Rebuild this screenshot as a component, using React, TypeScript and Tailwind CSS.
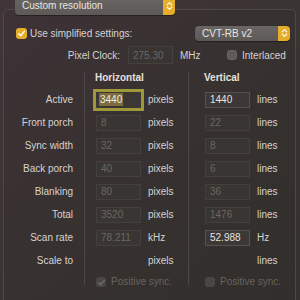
import React from 'react';

type FieldState = 'focus' | 'enabled' | 'disabled' | 'none';

interface Row {
  label: string;
  h: string;
  hUnit: string;
  hState: FieldState;
  v: string;
  vUnit: string;
  vState: FieldState;
}

const rows: Row[] = [
  { label: 'Active', h: '3440', hUnit: 'pixels', hState: 'focus', v: '1440', vUnit: 'lines', vState: 'enabled' },
  { label: 'Front porch', h: '8', hUnit: 'pixels', hState: 'disabled', v: '22', vUnit: 'lines', vState: 'disabled' },
  { label: 'Sync width', h: '32', hUnit: 'pixels', hState: 'disabled', v: '8', vUnit: 'lines', vState: 'disabled' },
  { label: 'Back porch', h: '40', hUnit: 'pixels', hState: 'disabled', v: '6', vUnit: 'lines', vState: 'disabled' },
  { label: 'Blanking', h: '80', hUnit: 'pixels', hState: 'disabled', v: '36', vUnit: 'lines', vState: 'disabled' },
  { label: 'Total', h: '3520', hUnit: 'pixels', hState: 'disabled', v: '1476', vUnit: 'lines', vState: 'disabled' },
  { label: 'Scan rate', h: '78.211', hUnit: 'kHz', hState: 'disabled', v: '52.988', vUnit: 'Hz', vState: 'enabled' },
  { label: 'Scale to', h: '', hUnit: 'pixels', hState: 'none', v: '', vUnit: 'lines', vState: 'none' },
];

const Check = ({ color }: { color: string }) => (
  <svg width="9" height="9" viewBox="0 0 10 10">
    <path d="M2 5.2 L4.2 7.4 L8.2 2.6" fill="none" stroke={color} strokeWidth="1.6" strokeLinecap="round" strokeLinejoin="round" />
  </svg>
);

const Chevrons = () => (
  <svg width="7" height="10" viewBox="0 0 7 10">
    <path d="M1.2 3.8 L3.5 1.6 L5.8 3.8 M1.2 6.2 L3.5 8.4 L5.8 6.2" fill="none" stroke="#fff" strokeWidth="1.1" strokeLinecap="round" strokeLinejoin="round" />
  </svg>
);

const Popup = ({ text, className }: { text: string; className: string }) => (
  <div className={`flex rounded-[4px] overflow-hidden shadow-[0_0.5px_1px_rgba(0,0,0,0.4)] ${className}`}>
    <div className="flex-1 flex items-center pl-[7px] bg-gradient-to-b from-[#6a6664] to-[#5d5957] text-[#e8e6e4]">
      {text}
    </div>
    <div className="w-[12px] flex items-center justify-center bg-[#e6ad2b]">
      <Chevrons />
    </div>
  </div>
);

const Field = ({ value, state }: { value: string; state: FieldState }) => {
  if (state === 'none') return <div className="w-[45px] h-[16px]" />;
  if (state === 'focus') {
    return (
      <div className="w-[45px] h-[16px] flex items-center pl-[3px] bg-[#3b3734] ring-[3px] ring-[#9f983b]">
        <span className="bg-[#7e6c3e] text-[#f2ece0] leading-[13px] px-[1px]">{value}</span>
      </div>
    );
  }
  const enabled = state === 'enabled';
  return (
    <div
      className={`w-[45px] h-[16px] flex items-center pl-[4px] border ${
        enabled ? 'bg-[#3c3835] border-[#57524f] text-[#e6e3e0]' : 'bg-[#393532] border-[#44403d] text-[#6b6764]'
      }`}
    >
      {value}
    </div>
  );
};

export default function App() {
  return (
    <div
      className="w-[300px] h-[300px] overflow-hidden flex flex-col bg-gradient-to-br from-[#41353a] via-[#3a3432] to-[#34302d] text-[10px] text-[#d6d3d1]"
      style={{ fontFamily: '"Liberation Sans", Arial, sans-serif' }}
    >
      <Popup text="Custom resolution" className="relative z-10 ml-[15px] -mt-[4px] w-[160px] h-[19px] shrink-0" />

      <div className="-mt-[6px] ml-[3px] w-[293px] h-[300px] shrink-0 rounded-[5px] border border-[#4d4748] bg-black/[0.04] flex flex-col">
        {/* simplified settings */}
        <div className="mt-[15px] h-[16px] flex items-center pl-[12px] pr-[5px]">
          <div className="w-[11px] h-[11px] rounded-[3px] bg-[#e6ad2b] flex items-center justify-center">
            <Check color="#fff" />
          </div>
          <span className="ml-[3px]">Use simplified settings:</span>
          <Popup text="CVT-RB v2" className="ml-auto w-[95px] h-[15px]" />
        </div>

        {/* pixel clock */}
        <div className="mt-[5px] h-[18px] flex items-center">
          <span className="w-[116px] text-right">Pixel Clock:</span>
          <div className="ml-[8px] w-[45px] h-[18px] flex items-center pl-[4px] border border-[#44403d] bg-[#393532] text-[#6b6764]">
            275.30
          </div>
          <span className="ml-[7px] w-[47px]">MHz</span>
          <div className="w-[10px] h-[10px] rounded-[3px] bg-[#5f5a58] border border-[#6c6765]" />
          <span className="ml-[5px]">Interlaced</span>
        </div>

        {/* timings grid */}
        <div className="mt-[8px] grid grid-cols-[80px_104px_1fr]">
          <div className="flex flex-col">
            <div className="h-[16px]" />
            {rows.map(r => (
              <div key={r.label} className="h-[23px] flex items-center justify-end pr-[11px]">
                {r.label}
              </div>
            ))}
          </div>

          <div className="flex flex-col border-l border-[#4d4748] h-[213px]">
            <div className="h-[16px] pl-[10px] pb-[6px] flex items-center font-bold text-[#e4e1df]">Horizontal</div>
            {rows.map(r => (
              <div key={r.label} className="h-[23px] flex items-center pl-[11px]">
                <Field value={r.h} state={r.hState} />
                <span className="ml-[7px]">{r.hUnit}</span>
              </div>
            ))}
            <div className="h-[13px] flex items-start pt-[5px] pl-[11px]">
              <div className="w-[10px] h-[10px] rounded-[3px] bg-[#4a4643] flex items-center justify-center">
                <Check color="#6f6b68" />
              </div>
              <span className="ml-[5px] text-[#68635f] leading-[10px]">Positive sync.</span>
            </div>
          </div>

          <div className="flex flex-col border-l border-[#4d4748] h-[213px]">
            <div className="h-[16px] pl-[15px] pb-[6px] flex items-center font-bold text-[#e4e1df]">Vertical</div>
            {rows.map(r => (
              <div key={r.label} className="h-[23px] flex items-center pl-[16px]">
                <Field value={r.v} state={r.vState} />
                <span className="ml-[7px]">{r.vUnit}</span>
              </div>
            ))}
            <div className="h-[13px] flex items-start pt-[5px] pl-[16px]">
              <div className="w-[10px] h-[10px] rounded-[3px] bg-[#4a4643]" />
              <span className="ml-[5px] text-[#68635f] leading-[10px]">Positive sync.</span>
            </div>
          </div>
        </div>
      </div>
    </div>
  );
}
